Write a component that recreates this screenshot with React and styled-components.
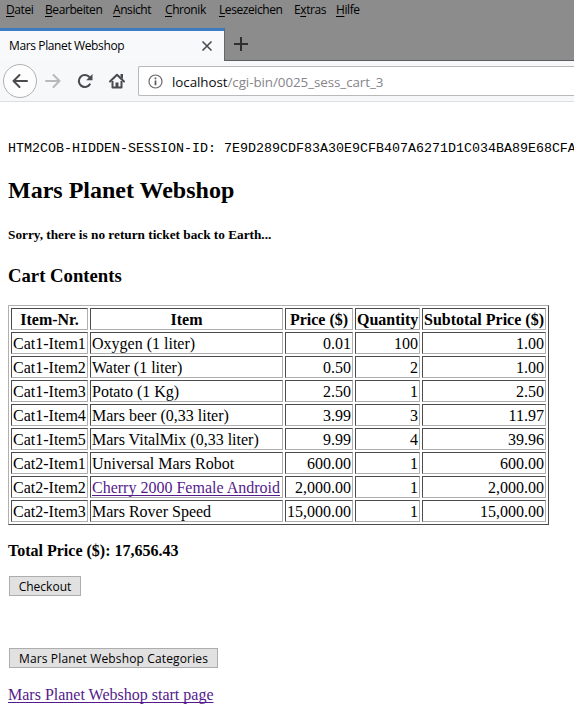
import React from "react";
import styled, { createGlobalStyle } from "styled-components";

const ui = '"Open Sans", "Noto Sans", sans-serif';
const serif = '"Liberation Serif", "Times New Roman", serif';

const GlobalStyle = createGlobalStyle`
  * { box-sizing: border-box; }
  body { margin: 0; background: #fff; overflow: hidden; }
`;

const Window = styled.div`
  width: 574px;
  height: 717px;
  overflow: hidden;
  background: #fff;
  color: #000;
`;

const TitleBar = styled.header`
  height: 61px;
  background: #8c8c8c;
  display: flex;
  flex-direction: column;
  font-family: ${ui};
`;

const MenuBar = styled.nav`
  height: 28px;
  padding-left: 6px;
  display: flex;
`;

const MenuItem = styled.span`
  width: ${(p) => p.$width}px;
  font-size: 12px;
  line-height: 20px;
  letter-spacing: ${(p) => p.$spacing || 0}px;
  white-space: nowrap;
  u { text-underline-offset: 2px; text-decoration-thickness: 1px; text-decoration-skip-ink: none; }
`;

const TabStrip = styled.div`
  height: 33px;
  display: flex;
`;

const Tab = styled.div`
  width: 225px;
  border-top: 3px solid #3d7cc0;
  border-right: 1px solid #65656a;
  background: #f8f9fb;
  padding: 0 11px 0 9px;
  display: flex;
  align-items: center;
  justify-content: space-between;
`;

const TabTitle = styled.span`
  font-size: 12px;
  line-height: 18px;
  letter-spacing: -0.38px;
`;

const TabRest = styled.div`
  flex: 1;
  border-bottom: 1px solid #5c5c61;
  padding: 8px 0 0 8px;
`;

const Icon = styled.svg`
  display: block;
  flex: none;
  fill: none;
`;

const Toolbar = styled.div`
  height: 41px;
  background: #f7f8fa;
  border-bottom: 1px solid #dfdfe1;
  display: flex;
  align-items: center;
  padding-left: 3px;
  font-family: ${ui};
`;

const BackButton = styled.span`
  width: 34px;
  height: 34px;
  border: 1px solid #b1b1b4;
  border-radius: 50%;
  background: #fdfdfe;
  display: grid;
  place-items: center;
`;

const ToolButton = styled.span`
  width: 32px;
  height: 34px;
  display: grid;
  place-items: center;
`;

const AddressBar = styled.div`
  flex: 1;
  height: 30px;
  margin-left: 5px;
  border: 1px solid #b9b9bc;
  border-right: 0;
  border-radius: 2px 0 0 2px;
  background: #fff;
  display: flex;
  align-items: center;
  padding-left: 9px;
`;

const Url = styled.span`
  padding-top: 2px;
  margin-left: 9px;
  font-size: 13.4px;
  line-height: 20px;
  color: #85858a;
  letter-spacing: -0.07px;
  white-space: nowrap;
  b { font-weight: 400; color: #0c0c0d; }
`;

const Page = styled.main`
  padding: 39px 0 0 8px;
  font-family: ${serif};
  font-size: 16px;
  line-height: 18px;
`;

const Session = styled.div`
  height: 16px;
  font: 13.333px/16px "Liberation Mono", "Courier New", monospace;
  white-space: nowrap;
`;

const Title = styled.h2`
  margin: 19px 0 23px;
  font-size: 24px;
  line-height: 28px;
`;

const Slogan = styled.h5`
  margin: 0 0 22px;
  font-size: 13.28px;
  line-height: 16px;
`;

const Subtitle = styled.h3`
  margin: 0 0 18px;
  font-size: 18.72px;
  line-height: 22px;
`;

const CartTable = styled.table`
  width: 541px;
  table-layout: fixed;
  border: 1px solid;
  border-color: #b0b0b0 #4c4c4c #4c4c4c #b0b0b0;
  border-collapse: separate;
  border-spacing: 2px;
`;

const Column = styled.col`
  width: ${(p) => p.$width}px;
`;

const cellStyle = `
  height: 22px;
  padding: 2px 1px 0;
  border: 1px solid;
  border-color: #4c4c4c #b0b0b0 #b0b0b0 #4c4c4c;
  line-height: 18px;
  white-space: nowrap;
`;

const HeadCell = styled.th`${cellStyle}`;

const Cell = styled.td`
  ${cellStyle}
  text-align: ${(p) => (p.$numeric ? "right" : "left")};
`;

const Link = styled.a`
  color: #551a8b;
  text-decoration: underline;
  text-decoration-skip-ink: none;
  text-underline-offset: 2px;
  text-decoration-thickness: 1px;
`;

const Total = styled.p`
  margin: 17px 0 16px;
  font-weight: bold;
`;

const Button = styled.button`
  display: block;
  width: ${(p) => p.$width}px;
  height: 20px;
  margin: 0 0 ${(p) => p.$gap}px 1px;
  padding: 1px 0 0;
  border: 1px solid #adadad;
  border-radius: 0;
  background: #e1e1e1;
  color: #000;
  font: 12px/17px ${ui};
  letter-spacing: ${(p) => p.$spacing || 0}px;
  white-space: nowrap;
`;

const menu = [
  ["", "D", "atei", 39],
  ["", "B", "earbeiten", 68],
  ["", "A", "nsicht", 52],
  ["", "C", "hronik", 54],
  ["", "L", "esezeichen", 75],
  ["E", "x", "tras", 42],
  ["", "H", "ilfe", 40],
];

const columns = [
  ["Item-Nr.", 77],
  ["Item", 193],
  ["Price ($)", 68],
  ["Quantity", 65],
  ["Subtotal Price ($)", 124],
];

const items = [
  ["Cat1-Item1", "Oxygen (1 liter)", "0.01", "100", "1.00"],
  ["Cat1-Item2", "Water (1 liter)", "0.50", "2", "1.00"],
  ["Cat1-Item3", "Potato (1 Kg)", "2.50", "1", "2.50"],
  ["Cat1-Item4", "Mars beer (0,33 liter)", "3.99", "3", "11.97"],
  ["Cat1-Item5", "Mars VitalMix (0,33 liter)", "9.99", "4", "39.96"],
  ["Cat2-Item1", "Universal Mars Robot", "600.00", "1", "600.00"],
  ["Cat2-Item2", "Cherry 2000 Female Android", "2,000.00", "1", "2,000.00"],
  ["Cat2-Item3", "Mars Rover Speed", "15,000.00", "1", "15,000.00"],
];

export default function App() {
  return (
    <Window>
      <GlobalStyle />
      <TitleBar>
        <MenuBar>
          {menu.map(([before, key, after, width]) => (
            <MenuItem key={key} $width={width} $spacing={-0.42}>
              {before}<u>{key}</u>{after}
            </MenuItem>
          ))}
        </MenuBar>
        <TabStrip>
          <Tab>
            <TabTitle>Mars Planet Webshop</TabTitle>
            <Icon width="12" height="12" viewBox="0 0 12 12" stroke="#4a4a4f" strokeWidth="1.6">
              <path d="M1.5 1.5l9 9M10.5 1.5l-9 9" />
            </Icon>
          </Tab>
          <TabRest>
            <Icon width="16" height="16" viewBox="0 0 16 16" stroke="#2f2f31" strokeWidth="2">
              <path d="M8 1v14M1 8h14" />
            </Icon>
          </TabRest>
        </TabStrip>
      </TitleBar>
      <Toolbar>
        <BackButton>
          <Icon width="16" height="16" viewBox="0 0 16 16" stroke="#4a4a4f" strokeWidth="2" strokeLinecap="round" strokeLinejoin="round">
            <path d="M15 8H1.5M7.5 2L1.5 8l6 6" />
          </Icon>
        </BackButton>
        <ToolButton>
          <Icon width="16" height="16" viewBox="0 0 16 16" stroke="#b9b9bc" strokeWidth="2" strokeLinecap="round" strokeLinejoin="round">
            <path d="M1 8h13.5M8.5 2l6 6-6 6" />
          </Icon>
        </ToolButton>
        <ToolButton>
          <Icon width="16" height="16" viewBox="0 0 16 16">
            <path d="M12.8 11.4A6 6 0 1 1 12.5 4.200" stroke="#4a4a4f" strokeWidth="2.1" strokeLinecap="round" />
            <path d="M15.500 1v6.300H9.200z" fill="#4a4a4f" />
          </Icon>
        </ToolButton>
        <ToolButton>
          <Icon width="16" height="16" viewBox="0 0 16 16">
            <path d="M1 8.500L8 1.700l7 6.800" stroke="#4a4a4f" strokeWidth="2" strokeLinecap="round" strokeLinejoin="round" />
            <path d="M11.500 1h2.500v5l-2.500-2z" fill="#4a4a4f" />
            <path d="M3.500 8v6.500h9V8" stroke="#4a4a4f" strokeWidth="2" strokeLinejoin="round" />
            <path d="M6.500 9.500h3V15h-3z" fill="#4a4a4f" />
          </Icon>
        </ToolButton>
        <AddressBar>
          <Icon width="15" height="15" viewBox="0 0 15 15">
            <circle cx="7.500" cy="7.500" r="6.500" stroke="#66666a" strokeWidth="1.200" />
            <path d="M7.500 6.500V11.300M7.500 3.500v1.700" stroke="#55555a" strokeWidth="1.700" />
          </Icon>
          <Url><b>localhost</b>/cgi-bin/0025_sess_cart_3</Url>
        </AddressBar>
      </Toolbar>
      <Page>
        <Session>HTM2COB-HIDDEN-SESSION-ID: 7E9D289CDF83A30E9CFB407A6271D1C034BA89E68CFA</Session>
        <Title>Mars Planet Webshop</Title>
        <Slogan>Sorry, there is no return ticket back to Earth...</Slogan>
        <Subtitle>Cart Contents</Subtitle>
        <CartTable>
          <colgroup>
            {columns.map(([name, width]) => <Column key={name} $width={width} />)}
          </colgroup>
          <thead>
            <tr>{columns.map(([name]) => <HeadCell key={name}>{name}</HeadCell>)}</tr>
          </thead>
          <tbody>
            {items.map(([id, name, price, quantity, subtotal]) => (
              <tr key={id}>
                <Cell>{id}</Cell>
                <Cell>{id === "Cat2-Item2" ? <Link href="#">{name}</Link> : name}</Cell>
                <Cell $numeric>{price}</Cell>
                <Cell $numeric>{quantity}</Cell>
                <Cell $numeric>{subtotal}</Cell>
              </tr>
            ))}
          </tbody>
        </CartTable>
        <Total>Total Price ($): 17,656.43</Total>
        <Button $width={72} $gap={52}>Checkout</Button>
        <Button $width={209} $gap={18} $spacing={0.14}>Mars Planet Webshop Categories</Button>
        <Link href="#">Mars Planet Webshop start page</Link>
      </Page>
    </Window>
  );
}
